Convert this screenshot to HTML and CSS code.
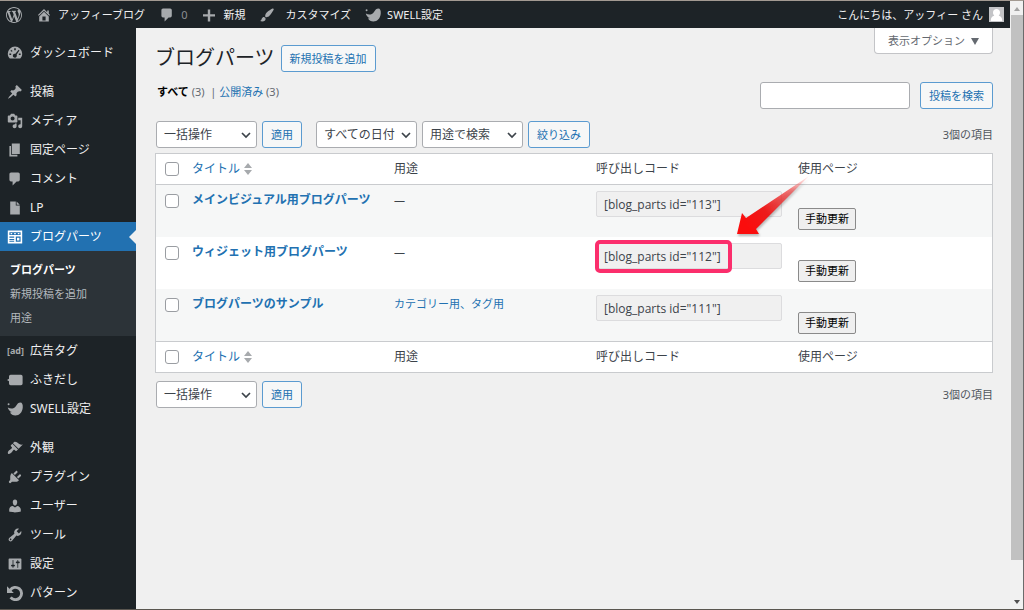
FILE: index.html
```html
<!DOCTYPE html>
<html lang="ja">
<head>
<meta charset="utf-8">
<meta name="viewport" content="width=device-width, initial-scale=1">
<title>ブログパーツ</title>
<link rel="stylesheet" href="styles.css">
</head>
<body>
<svg class="sprite" aria-hidden="true">
  <symbol id="comment" viewBox="0 0 20 20"><path d="M5 2h9c1.100 0 2 .9 2 2v7c0 1.100-.9 2-2 2h-2l-5 5v-5H5c-1.100 0-2-.9-2-2V4c0-1.100.9-2 2-2z"/></symbol>
  <symbol id="swell" viewBox="0 0 20 20"><path d="M1 8c3 1.800 6.500 2 9-.2C12.300 5.800 13 2 16.500 2c2.600 0 3.500 2.600 3.200 6C19.200 14 15.500 18 10.500 18 7.500 18 5 16.500 3.800 14.300l2.200-.5C3.500 12.800 1.500 10.800 1 8z"/><circle cx="2" cy="4" r="1.200"/></symbol>
  <symbol id="chevron" viewBox="0 0 12 12"><path d="M2 4l4 4 4-4" fill="none" stroke="currentColor" stroke-width="1.700"/></symbol>
  <symbol id="sort" viewBox="0 0 8 12"><path d="M4 0l4 5H0zM4 12L0 7h8z"/></symbol>
</svg>
<div class="window">
  <div class="screen">
    <header class="adminbar">
      <a href="#" class="bar-item" aria-label="WordPress"><svg class="icon logo" viewBox="0 0 20 20"><path d="M20 10c0-5.510-4.490-10-10-10C4.480 0 0 4.490 0 10c0 5.520 4.480 10 10 10 5.510 0 10-4.480 10-10zM7.780 15.370L4.370 6.220c.55-.02 1.170-.08 1.170-.08.5-.06.44-1.130-.06-1.110 0 0-1.450.11-2.370.11-.18 0-.37 0-.58-.01C4.120 2.690 6.870 1.110 10 1.110c2.330 0 4.450.87 6.050 2.340-.68-.11-1.650.39-1.650 1.580 0 .74.45 1.360.9 2.100.35.61.55 1.360.55 2.460 0 1.490-1.400 5-1.400 5l-3.030-8.370c.54-.02.82-.17.82-.17.5-.05.44-1.250-.06-1.220 0 0-1.440.12-2.380.12-.87 0-2.330-.12-2.330-.12-.5-.03-.56 1.200-.06 1.220l.92.08 1.260 3.410zM17.410 10c.24-.64.74-1.870.43-4.250.7 1.290 1.050 2.710 1.050 4.250 0 3.290-1.730 6.240-4.400 7.780.97-2.590 1.940-5.200 2.920-7.780zM6.100 18.090C3.120 16.650 1.110 13.530 1.110 10c0-1.300.23-2.480.72-3.590C3.250 10.300 4.670 14.200 6.100 18.090zm4.030-6.630l2.580 6.980c-.86.29-1.760.45-2.710.45-.79 0-1.570-.11-2.290-.33.81-2.380 1.620-4.740 2.420-7.100z"/></svg></a>
      <a href="#" class="bar-item"><svg class="icon" viewBox="0 0 20 20"><path d="M16 8.500l1.530 1.530-1.060 1.060L10 4.600l-6.470 6.490-1.060-1.060L10 2.500l4 4v-2h2v4zm-6-2.460l6 5.990V18H4v-5.970zM12 17v-5H8v5h4z"/></svg><span>アッフィーブログ</span></a>
      <a href="#" class="bar-item"><svg class="icon"><use href="#comment"/></svg><span class="dim">0</span></a>
      <a href="#" class="bar-item"><svg class="icon" viewBox="0 0 20 20"><path d="M17.500 9v3h-6v6h-3v-6h-6V9h6V3h3v6z"/></svg><span>新規</span></a>
      <a href="#" class="bar-item wide"><svg class="icon" viewBox="0 0 20 20"><path d="M18.330 3.570s.27-.8-.31-1.360c-.53-.52-1.220-.24-1.220-.24-.61.3-5.760 3.470-7.670 5.570-.86.96-2.060 3.790-1.090 4.820.92.98 3.960-.17 4.790-1 2.060-2.060 5.210-7.170 5.500-7.790zM1.400 17.650c2.370-1.560 1.460-3.410 3.230-4.640.93-.65 2.220-.62 3.080.29.63.67.8 2.570-.16 3.460-1.570 1.450-4 1.550-6.150.89z"/></svg><span>カスタマイズ</span></a>
      <a href="#" class="bar-item"><svg class="icon"><use href="#swell"/></svg><span>SWELL設定</span></a>
      <a href="#" class="bar-item account"><span>こんにちは、アッフィー さん</span><svg class="avatar" viewBox="0 0 15 15"><path fill="#c3c4c7" d="M0 0h15v15H0z"/><path fill="#fff" d="M7.500 2C9.500 2 11 3.500 11 5.500c0 1.300-.5 2.500-1.300 3.200 2.300.6 3.300 2 3.500 4.300v1H1.800v-1c.2-2.300 1.200-3.700 3.500-4.300C4.500 8 4 6.800 4 5.500 4 3.500 5.500 2 7.500 2z"/></svg></a>
    </header>
    <div class="body">
      <nav class="menu">
        <a href="#" class="menu-item"><svg class="icon" viewBox="0 0 20 20"><path fill-rule="evenodd" d="M3.500 17C2 15.500 1 13.400 1 11a9 9 0 0 1 18 0c0 2.400-1 4.500-2.500 6zM9 4v2.500h2V4zM5 6L4.500 7.500 6 8.500l1-1zM3 10.500v2h2.200v-2zM14.800 10.500v2H17v-2zM14.500 6l-4 5a2.500 2.500 0 1 0 1.500 1.200L15.500 7z"/></svg><span>ダッシュボード</span></a>
        <hr class="menu-gap">
        <a href="#" class="menu-item"><svg class="icon" viewBox="0 0 20 20"><path d="M10.440 3.020l1.820-1.820 6.360 6.350-1.830 1.820c-1.050-.68-2.480-.57-3.410.36l-.75.75c-.92.93-1.040 2.350-.35 3.410l-1.830 1.820-2.410-2.410-2.800 2.790c-.42.42-3.380 2.710-3.800 2.290s1.860-3.390 2.280-3.810l2.790-2.790L4.100 9.360l1.830-1.820c1.050.69 2.480.57 3.400-.36l.75-.75c.93-.92 1.050-2.350.36-3.410z"/></svg><span>投稿</span></a>
        <a href="#" class="menu-item"><svg class="icon" viewBox="0 0 20 20"><path d="M13 11V4c0-.55-.45-1-1-1h-1.670L9 1H5L3.670 3H2c-.55 0-1 .45-1 1v7c0 .55.45 1 1 1h10c.55 0 1-.45 1-1zM7 4.500c1.380 0 2.500 1.120 2.500 2.500S8.380 9.500 7 9.500 4.500 8.380 4.500 7 5.620 4.500 7 4.500zM14 6h5v10.500c0 1.380-1.120 2.500-2.500 2.500S14 17.880 14 16.500s1.120-2.500 2.500-2.500c.17 0 .34.02.5.05V9h-3V6zm-4 8.050V13h2v3.500c0 1.380-1.120 2.500-2.500 2.500S7 17.880 7 16.500 8.120 14 9.500 14c.17 0 .34.02.5.05z"/></svg><span>メディア</span></a>
        <a href="#" class="menu-item"><svg class="icon" viewBox="0 0 20 20"><path d="M6 15V2h10v13H6zm-1 1h8v2H3V5h2v11z"/></svg><span>固定ページ</span></a>
        <a href="#" class="menu-item"><svg class="icon"><use href="#comment"/></svg><span>コメント</span></a>
        <a href="#" class="menu-item"><svg class="icon" viewBox="0 0 20 20"><path d="M11 2v5h5v11H4V2zM12 2l4 4h-4z"/></svg><span>LP</span></a>
        <a href="#" class="menu-item current" aria-current="page"><svg class="icon" viewBox="0 0 20 20"><path fill-rule="evenodd" d="M1 2h18v16H1zM3 4v3.500h14V4zM3 9.500v1.500h6V9.500zM3 12.500V14h6v-1.500zM3 15.300v1h6v-1zM11 9.500V16h6V9.500zM12.500 11h3v3.500h-3zM4.500 5h2v1.500h-2zM9 5h2v1.500H9zM13.500 5h2v1.500h-2z"/></svg><span>ブログパーツ</span></a>
        <div class="submenu">
          <a href="#" class="active">ブログパーツ</a>
          <a href="#">新規投稿を追加</a>
          <a href="#">用途</a>
        </div>
        <a href="#" class="menu-item"><span class="ad-mark" aria-hidden="true">[ad]</span><span>広告タグ</span></a>
        <a href="#" class="menu-item"><svg class="icon" viewBox="0 0 20 20"><path d="M4.500 3.500h13q2 0 2 2v9q0 2-2 2h-13q-2 0-2-2v-3L0 10l2.500-1.500v-3q0-2 2-2z"/></svg><span>ふきだし</span></a>
        <a href="#" class="menu-item"><svg class="icon"><use href="#swell"/></svg><span>SWELL設定</span></a>
        <hr class="menu-gap">
        <a href="#" class="menu-item"><svg class="icon" viewBox="0 0 20 20"><path d="M14.480 11.060L7.410 3.990l1.500-1.500c.5-.56 2.300-.47 3.510.32 1.210.8 1.430 1.280 2.910 2.100 1.180.64 2.450 1.260 4.450.85zm-.71.71L6.700 4.700 4.930 6.470c-.39.39-.39 1.020 0 1.410l1.060 1.060c.39.39.39 1.030 0 1.420-.6.6-1.430 1.110-2.210 1.690-.35.26-.7.53-1.010.84C1.430 14.230.4 16.080 1.400 17.070c.99 1 2.840-.03 4.180-1.360.31-.31.58-.66.85-1.020.57-.78 1.080-1.610 1.690-2.210.39-.39 1.020-.39 1.410 0l1.060 1.060c.39.39 1.020.39 1.410 0z"/></svg><span>外観</span></a>
        <a href="#" class="menu-item"><svg class="icon" viewBox="0 0 20 20"><path d="M13.110 4.360L9.870 7.600 8 5.730l3.240-3.240c.35-.34 1.050-.2 1.560.32.52.51.66 1.210.31 1.550zm-8 1.770l.91-1.120 9.010 9.010-1.190.84c-.71.71-2.630 1.160-3.820 1.160H6.140L4.900 17.260c-.59.59-1.540.59-2.120 0-.59-.58-.59-1.530 0-2.120l1.240-1.240v-3.880c0-1.130.4-3.190 1.090-3.890zm7.260 3.970l3.240-3.240c.34-.35 1.040-.21 1.550.31.52.51.66 1.210.31 1.550l-3.240 3.250z"/></svg><span>プラグイン</span></a>
        <a href="#" class="menu-item"><svg class="icon" viewBox="0 0 20 20"><path d="M10 9.250c-2.270 0-2.730-3.440-2.730-3.440C7 4.020 7.820 2 9.970 2c2.160 0 2.980 2.020 2.710 3.810 0 0-.41 3.440-2.680 3.440zm0 2.570L12.720 10c2.390 0 4.520 2.330 4.520 4.530v2.490s-3.650 1.130-7.240 1.130c-3.650 0-7.240-1.130-7.240-1.130v-2.490c0-2.250 1.940-4.480 4.470-4.480z"/></svg><span>ユーザー</span></a>
        <a href="#" class="menu-item"><svg class="icon" viewBox="0 0 20 20"><path d="M16.680 9.770c-1.340 1.340-3.300 1.670-4.950.99l-5.410 6.520c-.99.99-2.590.99-3.580 0s-.99-2.590 0-3.570l6.520-5.420c-.68-1.650-.35-3.610.99-4.950 1.280-1.280 3.120-1.620 4.720-1.060l-2.890 2.890 2.820 2.820 2.860-2.870c.53 1.580.18 3.390-1.080 4.650zM3.810 16.210c.4.39 1.040.39 1.430 0 .4-.4.4-1.040 0-1.430-.39-.4-1.030-.4-1.430 0-.39.39-.39 1.030 0 1.430z"/></svg><span>ツール</span></a>
        <a href="#" class="menu-item"><svg class="icon" viewBox="0 0 20 20"><path d="M18 16V4c0-.55-.45-1-1-1H3c-.55 0-1 .45-1 1v12c0 .55.45 1 1 1h14c.55 0 1-.45 1-1zM8 11h1c.55 0 1 .45 1 1s-.45 1-1 1H8v1.500c0 .28-.22.5-.5.5s-.5-.22-.5-.5V13H6c-.55 0-1-.45-1-1s.45-1 1-1h1V5.500c0-.28.22-.5.5-.5s.5.22.5.5V11zm5-2h-1c-.55 0-1-.45-1-1s.45-1 1-1h1V5.500c0-.28.22-.5.5-.5s.5.22.5.5V7h1c.55 0 1 .45 1 1s-.45 1-1 1h-1v5.500c0 .28-.22.5-.5.5s-.5-.22-.5-.5V9z"/></svg><span>設定</span></a>
        <a href="#" class="menu-item"><svg class="icon" viewBox="0 0 20 20"><path d="M4 6.500A7.700 7.700 0 1 1 4.500 15.500" fill="none" stroke="currentColor" stroke-width="3.600"/><path d="M0 1.500V10h8.500z"/></svg><span>パターン</span></a>
      </nav>
      <main class="content">
        <div class="heading">
          <h1>ブログパーツ</h1>
          <button type="button" class="btn">新規投稿を追加</button>
          <button type="button" class="screen-options">表示オプション <svg class="caret" viewBox="0 0 8 8"><path d="M0 1h8L4 8z"/></svg></button>
        </div>
        <div class="filters">
          <p class="views"><a href="#" class="all">すべて</a> (3)&nbsp; | <a href="#">公開済み</a> (3)</p>
          <form class="search">
            <input type="search" class="search-box" aria-label="投稿を検索">
            <button type="button" class="btn">投稿を検索</button>
          </form>
        </div>
        <div class="tablenav">
          <span class="picker"><select aria-label="一括操作"><option>一括操作</option></select><svg class="chevron"><use href="#chevron"/></svg></span>
          <button type="button" class="btn">適用</button>
          <span class="picker dates"><select aria-label="日付"><option>すべての日付</option></select><svg class="chevron"><use href="#chevron"/></svg></span>
          <span class="picker"><select aria-label="用途"><option>用途で検索</option></select><svg class="chevron"><use href="#chevron"/></svg></span>
          <button type="button" class="btn">絞り込み</button>
          <span class="count">3個の項目</span>
        </div>
        <table class="list">
          <thead>
            <tr><td class="check"><input type="checkbox" aria-label="すべて選択"></td><th><a href="#" class="sorter">タイトル<svg class="sort"><use href="#sort"/></svg></a></th><th>用途</th><th>呼び出しコード</th><th>使用ページ</th></tr>
          </thead>
          <tbody>
            <tr><td class="check"><input type="checkbox" aria-label="メインビジュアル用ブログパーツを選択"></td><td><a href="#" class="title">メインビジュアル用ブログパーツ</a></td><td class="use">—</td><td class="call"><input type="text" class="code" readonly aria-label="呼び出しコード" value="[blog_parts id=&quot;113&quot;]"></td><td class="pages"><button type="button" class="update">手動更新</button></td></tr>
            <tr><td class="check"><input type="checkbox" aria-label="ウィジェット用ブログパーツを選択"></td><td><a href="#" class="title">ウィジェット用ブログパーツ</a></td><td class="use">—</td><td class="call marked"><input type="text" class="code" readonly aria-label="呼び出しコード" value="[blog_parts id=&quot;112&quot;]"><span class="highlight"></span>
              <svg class="arrow" viewBox="0 0 80 66" aria-hidden="true"><defs><linearGradient id="fade" gradientUnits="userSpaceOnUse" x1="14" y1="54" x2="77" y2="4"><stop offset="0" stop-color="#fb0d0d"/><stop offset=".3" stop-color="#ec1c1c"/><stop offset=".7" stop-color="#ee4040" stop-opacity=".7"/><stop offset="1" stop-color="#f88" stop-opacity=".1"/></linearGradient></defs><path fill="url(#fade)" d="M4 62L9 41l4 5L76 4 23 57l3 5z"/></svg></td><td class="pages"><button type="button" class="update">手動更新</button></td></tr>
            <tr><td class="check"><input type="checkbox" aria-label="ブログパーツのサンプルを選択"></td><td><a href="#" class="title">ブログパーツのサンプル</a></td><td class="use"><a href="#">カテゴリー用、タグ用</a></td><td class="call"><input type="text" class="code" readonly aria-label="呼び出しコード" value="[blog_parts id=&quot;111&quot;]"></td><td class="pages"><button type="button" class="update">手動更新</button></td></tr>
          </tbody>
          <tfoot>
            <tr><td class="check"><input type="checkbox" aria-label="すべて選択"></td><th><a href="#" class="sorter">タイトル<svg class="sort"><use href="#sort"/></svg></a></th><th>用途</th><th>呼び出しコード</th><th>使用ページ</th></tr>
          </tfoot>
        </table>
        <div class="tablenav bottom">
          <span class="picker"><select aria-label="一括操作"><option>一括操作</option></select><svg class="chevron"><use href="#chevron"/></svg></span>
          <button type="button" class="btn">適用</button>
          <span class="count">3個の項目</span>
        </div>
      </main>
    </div>
  </div>
  <div class="scrollbar" aria-hidden="true">
    <svg class="scroll-arrow up" viewBox="0 0 12 14"><path d="M3 10l3-4 3 4z"/></svg>
    <div class="track"><div class="thumb"></div></div>
    <svg class="scroll-arrow" viewBox="0 0 12 14"><path d="M3 5h6L6 9z"/></svg>
  </div>
</div>
</body>
</html>
```

FILE: styles.css
```css
* {
  box-sizing: border-box;
}

body {
  margin: 0;
  background: #f0f0f0;
  color: #3c434a;
  font-family: "Noto Sans", "Noto Sans CJK JP", sans-serif;
  font-size: 11px;
  line-height: 16px;
}

a {
  color: #2271b1;
  text-decoration: none;
}

button,
input,
select {
  margin: 0;
  font: inherit;
  color: inherit;
}

svg {
  display: block;
  flex: none;
  fill: currentColor;
}

.sprite {
  display: none;
}

/* Window frame */
.window {
  display: flex;
  min-height: 100vh;
  border-top: 1px solid #a39a92;
  border-right: 1px solid #6b6b6b;
  border-bottom: 1px solid #5a5650;
}

.screen {
  display: flex;
  flex: 1;
  flex-direction: column;
  min-width: 0;
}

.scrollbar {
  display: flex;
  flex-direction: column;
  width: 13px;
  background: #f1f1f1;
  padding-left: 1px;
}

.scroll-arrow {
  width: 12px;
  height: 14px;
  color: #505050;
}

.scroll-arrow.up {
  color: #a3a3a3;
}

.track {
  flex: 1;
}

.thumb {
  height: 94%;
  background: #c1c1c1;
}

/* Admin bar */
.adminbar {
  display: flex;
  align-items: center;
  gap: 14px;
  height: 27px;
  padding: 0 6px;
  background: #1d2327;
}

.bar-item {
  display: flex;
  align-items: center;
  gap: 6px;
  color: #f0f0f1;
  white-space: nowrap;
}

.bar-item.wide {
  gap: 10px;
}

.icon {
  width: 16px;
  height: 16px;
  color: #a7aaad;
}

.dim {
  color: #8c8f94;
}

.account {
  margin-left: auto;
}

.avatar {
  width: 15px;
  height: 15px;
}

.body {
  display: flex;
  flex: 1;
}

/* Side menu */
.menu {
  flex: none;
  width: 136px;
  padding-top: 10px;
  background: #1d2327;
  font-size: 12px;
}

.menu-item {
  position: relative;
  display: flex;
  align-items: center;
  gap: 7px;
  height: 29px;
  padding-left: 7px;
  color: #f0f0f1;
}

.menu-gap {
  height: 10px;
  margin: 0;
  border: 0;
}

.menu-item.current {
  background: #2271b1;
  color: #fff;
}

.current .icon {
  color: #fff;
}

.current::after {
  content: "";
  position: absolute;
  right: 0;
  top: 8px;
  border: 7px solid transparent;
  border-left: 0;
  border-right-color: #f0f0f0;
}

.submenu {
  display: flex;
  flex-direction: column;
  padding: 7px 0 6px 10px;
  background: #2c3338;
  font-size: 11px;
  line-height: 24px;
}

.submenu a {
  color: #b4b9be;
}

.submenu .active {
  color: #fff;
  font-weight: 700;
}

.ad-mark {
  width: 16px;
  color: #a7aaad;
  font-size: 9px;
  font-weight: 700;
}

/* Content */
.content {
  flex: 1;
  min-width: 0;
  padding: 0 17px 0 19px;
}

.heading {
  display: flex;
  align-items: flex-start;
  gap: 6px;
}

h1 {
  margin: 15px 0 0;
  color: #1d2327;
  font-size: 20px;
  font-weight: 400;
  line-height: 30px;
}

.btn {
  height: 27px;
  padding: 0 8px;
  border: 1px solid #5b9bd0;
  border-radius: 3px;
  background: #f6f7f7;
  color: #2271b1;
  white-space: nowrap;
}

.heading .btn {
  margin-top: 17px;
}

.screen-options {
  display: flex;
  align-items: center;
  gap: 6px;
  height: 26px;
  margin-left: auto;
  padding: 0 13px;
  border: 1px solid #c3c4c7;
  border-top: 0;
  border-radius: 0 0 4px 4px;
  background: #fff;
  color: #646970;
}

.caret {
  width: 8px;
  height: 8px;
}

.filters {
  display: flex;
  justify-content: space-between;
  margin-top: 9px;
  padding-left: 2px;
}

.views {
  margin: 2px 0 0;
  color: #646970;
}

.views .all {
  color: #000;
  font-weight: 700;
}

.search {
  display: flex;
  gap: 10px;
}

.search-box {
  width: 150px;
  height: 27px;
  padding: 0 8px;
  border: 1px solid #aaacb0;
  border-radius: 3px;
  background: #fff;
  appearance: none;
}

.tablenav {
  display: flex;
  align-items: center;
  gap: 5px;
  margin-top: 12px;
  padding-left: 1px;
}

.tablenav.bottom {
  margin-top: 8px;
}

.picker {
  display: grid;
  align-items: center;
  width: 101px;
}

.picker.dates {
  margin-left: 9px;
}

.picker > * {
  grid-area: 1 / 1;
}

.picker select {
  width: 100%;
  height: 27px;
  padding: 0 7px;
  border: 1px solid #aaacb0;
  border-radius: 3px;
  background: #fff;
  font-size: 12px;
  appearance: none;
}

.chevron {
  width: 12px;
  height: 12px;
  margin-right: 5px;
  justify-self: end;
  pointer-events: none;
}

.count {
  margin-left: auto;
  color: #50575e;
}

/* List table */
.list {
  width: 100%;
  margin-top: 5px;
  border: 1px solid #c9cbce;
  border-spacing: 0;
  background: #fff;
  table-layout: fixed;
  font-size: 12px;
}

.list th,
.list td {
  padding: 7px 8px;
  font-weight: 400;
  text-align: left;
  vertical-align: top;
}

.list thead th,
.list thead td {
  border-bottom: 1px solid #c9cbce;
}

.list tfoot th,
.list tfoot td {
  border-top: 1px solid #c9cbce;
}

.list .check {
  width: 28px;
  padding: 8px 0 0 9px;
}

.check input {
  display: block;
  width: 14px;
  height: 14px;
  border: 1px solid #9a9da2;
  border-radius: 3px;
  background: #fff;
  appearance: none;
}

.check input:checked {
  background: #2271b1;
}

.sorter {
  display: inline-flex;
  align-items: center;
  gap: 4px;
}

.sort {
  width: 8px;
  height: 12px;
  color: #a7aaad;
}

.list tbody tr:nth-child(odd) {
  background: #f6f7f7;
}

.list tbody .check {
  padding-top: 9px;
}

.title {
  font-weight: 700;
}

.list .use {
  font-size: 11px;
}

.list .call {
  padding-top: 6px;
}

.code {
  display: block;
  width: 100%;
  height: 26px;
  padding: 0 7px;
  border: 1px solid #dcdcde;
  border-radius: 2px;
  background: #f0f0f0;
  font-family: "Open Sans", "Noto Sans CJK JP", sans-serif;
}

.list .pages {
  padding-top: 23px;
  padding-bottom: 7px;
}

.update {
  display: block;
  height: 22px;
  padding: 0 6px;
  border: 1px solid #8a8a8a;
  border-radius: 2px;
  background: #efefef;
  color: #000;
  font-size: 11px;
}

.list .marked {
  position: relative;
}

/* Callout over the second row */
.highlight {
  position: absolute;
  top: 3px;
  left: 7px;
  width: 137px;
  height: 33px;
  border: 4px solid #fb2e6c;
  border-radius: 5px;
}

.arrow {
  position: absolute;
  z-index: 1;
  top: -65px;
  left: 145px;
  width: 80px;
  height: 66px;
  filter: drop-shadow(1px 2px 1px rgb(0 0 0 / 25%));
  pointer-events: none;
}
```
